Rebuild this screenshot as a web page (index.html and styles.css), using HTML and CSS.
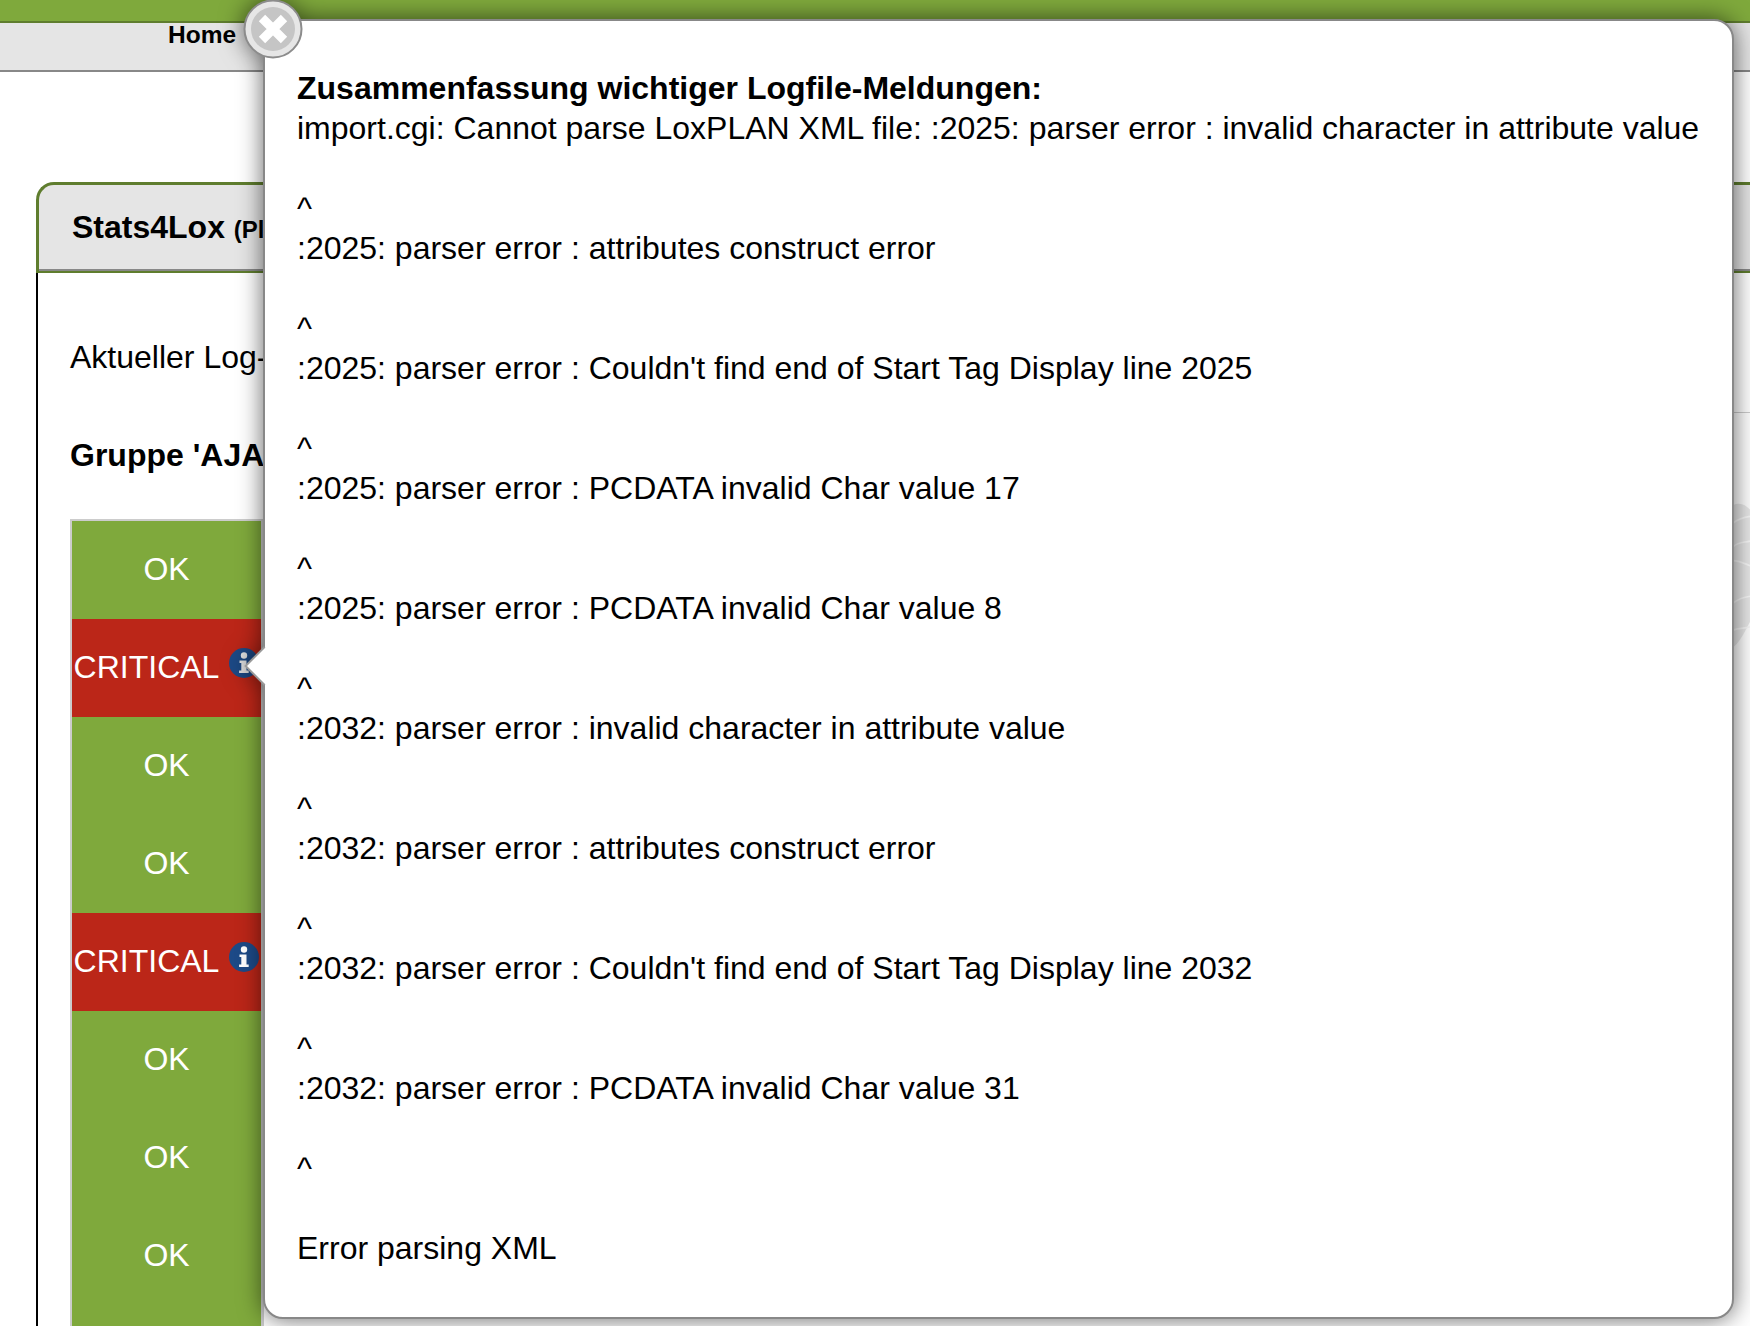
FILE: index.html
```html
<!DOCTYPE html>
<html lang="de">
<head>
<meta charset="utf-8">
<title>Stats4Lox</title>
<link rel="stylesheet" href="styles.css">
</head>
<body>
<header class="topbar"></header>
<nav class="nav"><a class="nav-link">Home</a></nav>
<main class="panel">
  <div class="panel-head"><span class="panel-title">Stats4Lox</span> <span class="panel-sub">(Pl</span></div>
  <div class="panel-body">
    <p class="log-info">Aktueller Log-</p>
    <div class="rule"></div>
    <p class="group-title">Gruppe 'AJA</p>
    <div class="status-table">
      <div class="row ok">OK</div>
      <div class="row critical">CRITICAL<svg class="info" viewBox="0 0 30 30"><circle cx="15" cy="15" r="15" fill="#1d4a87"/><circle cx="15" cy="7.5" r="3.2" fill="#e8e8e8"/><path d="M10.5 12.5h7v10h2.2v2.6h-9.6v-2.6h2.2v-7.4h-1.8z" fill="#e8e8e8"/></svg></div>
      <div class="row ok">OK</div>
      <div class="row ok">OK</div>
      <div class="row critical">CRITICAL<svg class="info" viewBox="0 0 30 30"><circle cx="15" cy="15" r="15" fill="#1d4a87"/><circle cx="15" cy="7.5" r="3.2" fill="#fff"/><path d="M10.5 12.5h7v10h2.2v2.6h-9.6v-2.6h2.2v-7.4h-1.8z" fill="#fff"/></svg></div>
      <div class="row ok">OK</div>
      <div class="row ok">OK</div>
      <div class="row ok">OK</div>
      <div class="row ok row-tail"></div>
    </div>
  </div>
</main>
<svg class="watermark" viewBox="0 0 20 170"><path d="M0 3C8-1 14 2 20 8V140C12 156 6 166 0 170Z" fill="#e8e8e8"/><path d="M0 24C7 18 13 17 20 16M0 52C6 46 12 47 20 45M0 68C8 68 14 72 20 74M0 118C8 112 13 111 20 110M0 150C8 147 13 148 20 146" fill="none" stroke="#f8f8f8" stroke-width="2"/></svg>
<aside class="popup">
  <span class="popup-arrow"></span>
  <svg class="popup-close" viewBox="0 0 60 60"><circle cx="30" cy="30" r="28.5" fill="#e6e6e6" stroke="#8c8c8c" stroke-width="2"/><circle cx="30" cy="30" r="22" fill="#c5c5c5"/><path d="M19 19L41 41M41 19L19 41" stroke="#fff" stroke-width="9"/></svg>
  <h2 class="popup-title">Zusammenfassung wichtiger Logfile-Meldungen:</h2>
  <p class="entry">import.cgi: Cannot parse LoxPLAN XML file: :2025: parser error : invalid character in attribute value</p>
  <p class="entry">^<br>:2025: parser error : attributes construct error</p>
  <p class="entry">^<br>:2025: parser error : Couldn't find end of Start Tag Display line 2025</p>
  <p class="entry">^<br>:2025: parser error : PCDATA invalid Char value 17</p>
  <p class="entry">^<br>:2025: parser error : PCDATA invalid Char value 8</p>
  <p class="entry">^<br>:2032: parser error : invalid character in attribute value</p>
  <p class="entry">^<br>:2032: parser error : attributes construct error</p>
  <p class="entry">^<br>:2032: parser error : Couldn't find end of Start Tag Display line 2032</p>
  <p class="entry">^<br>:2032: parser error : PCDATA invalid Char value 31</p>
  <p class="entry">^</p>
  <p class="entry">Error parsing XML</p>
</aside>
</body>
</html>
```
FILE: styles.css
```css
html, body {
  margin: 0;
  height: 1326px;
  overflow: hidden;
  background: #fff;
}
body {
  position: relative;
  font-family: "Liberation Sans", Arial, sans-serif;
  font-size: 32px;
  line-height: 40px;
  color: #000;
}
.topbar {
  height: 21px;
  background: #7fa93c;
  border-bottom: 2px solid #5f7d2e;
}
.nav {
  height: 47px;
  padding-left: 168px;
  background: #e5e5e5;
  border-bottom: 2px solid #888;
  font-size: 24.5px;
  line-height: 24px;
  font-weight: bold;
}
.panel {
  margin: 110px 0 0 36px;
}
.panel-head {
  box-sizing: border-box;
  height: 91px;
  padding: 22px 0 0 33px;
  background: #e5e5e5;
  border-top: 3px solid #5f7d2e;
  border-left: 3px solid #5f7d2e;
  border-bottom: 2px solid #5f7d2e;
  border-top-left-radius: 18px;
  box-shadow: inset 0 -2px #888;
  white-space: nowrap;
}
.panel-title {
  font-weight: bold;
}
.panel-sub {
  font-size: 24px;
  font-weight: bold;
}
.panel-body {
  padding: 64px 0 0 32px;
  border-left: 2px solid #000;
}
.log-info {
  margin: 0;
}
.rule {
  height: 1px;
  margin: 35px 0 22px 1000px;
  background: #ccc;
}
.group-title {
  margin: 0 0 44px;
  font-weight: bold;
}
.status-table {
  box-sizing: border-box;
  width: 194px;
  border-top: 2px solid #ccc;
  border-left: 2px solid #ccc;
  border-right: 3px solid #ccc;
  color: #fff;
}
.row {
  box-sizing: border-box;
  display: flex;
  align-items: center;
  justify-content: center;
  gap: 10px;
  height: 98px;
  padding-bottom: 3px;
  white-space: nowrap;
}
.row-tail {
  height: 21px;
  padding: 0;
}
.ok {
  background: #7fa93c;
}
.critical {
  background: #bb2618;
}
.info {
  width: 30px;
  height: 30px;
  margin-top: -7px;
}
.watermark {
  position: absolute;
  top: 490px;
  right: 0;
  width: 17px;
  height: 170px;
}
.popup {
  position: absolute;
  top: 19px;
  left: 263px;
  box-sizing: border-box;
  width: 1471px;
  height: 1300px;
  padding: 47px 0 0 32px;
  background: #fff;
  border: 2px solid #888;
  border-radius: 20px;
  filter: drop-shadow(0 0 12px rgba(0, 0, 0, .6));
  white-space: nowrap;
}
.popup-arrow {
  position: absolute;
  top: 631px;
  left: -15px;
  box-sizing: border-box;
  width: 28px;
  height: 28px;
  background: #fff;
  border-left: 2px solid #999;
  border-bottom: 2px solid #999;
  transform: rotate(45deg);
}
.popup-close {
  position: absolute;
  top: -22px;
  left: -22px;
  width: 60px;
  height: 60px;
}
.popup-title {
  margin: 0;
  font-size: 32px;
  line-height: 40px;
  font-weight: bold;
}
.entry {
  margin: 0 0 40px;
}
```
